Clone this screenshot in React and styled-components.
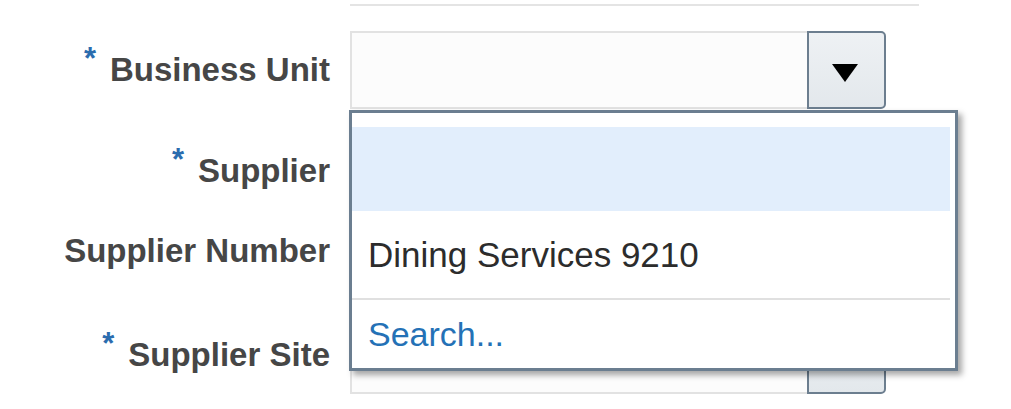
import React from "react";
import styled, { createGlobalStyle } from "styled-components";

const GlobalStyle = createGlobalStyle`
  html, body {
    margin: 0;
    padding: 0;
    background: #ffffff;
  }
  body {
    font-family: "Liberation Sans", Arial, sans-serif;
    width: 1011px;
    height: 409px;
    overflow: hidden;
  }
`;

const Form = styled.div`
  display: flex;
  flex-direction: column;
  width: 1011px;
`;

const Row = styled.div`
  display: grid;
  grid-template-columns: 330px 569px;
  column-gap: 20px;
  align-items: center;
  height: ${(p) => p.$h}px;
  margin-top: ${(p) => p.$mt || 0}px;
`;

const Rule = styled.div`
  grid-column: 2;
  height: 2px;
  background: #e4e4e4;
`;

const Label = styled.div`
  text-align: right;
  font-weight: bold;
  font-size: 33px;
  color: #464646;
  white-space: nowrap;
`;

const Req = styled.span`
  color: #2b6cae;
  font-size: 31px;
  font-weight: bold;
  line-height: 0;
  vertical-align: 12px;
  margin-right: 14px;
`;

const Field = styled.div`
  position: relative;
  display: flex;
  height: 78px;
  width: 536px;
`;

const Input = styled.div`
  flex: 0 0 457px;
  box-sizing: border-box;
  border: 2px solid #e2e2e2;
  border-right: none;
  background: #fcfcfc;
`;

const DropButton = styled.div`
  flex: 0 0 79px;
  box-sizing: border-box;
  border: 2px solid #6c7e8f;
  border-radius: 0 5px 5px 0;
  background: linear-gradient(#eef1f4, #e3e8ec);
  display: flex;
  align-items: center;
  justify-content: center;
  padding-top: 5px;
  padding-right: 3px;
`;

const Popup = styled.div`
  position: absolute;
  left: -1px;
  top: calc(100% + 1px);
  width: 609px;
  height: 261px;
  box-sizing: border-box;
  border: 3px solid #6b7e90;
  background: #ffffff;
  box-shadow: 4px 4px 6px rgba(0, 0, 0, 0.35);
  padding: 14px 5px 0 0;
  display: flex;
  flex-direction: column;
  z-index: 2;
`;

const Option = styled.div`
  height: ${(p) => p.$h}px;
  flex: ${(p) => (p.$grow ? "1" : "none")};
  display: flex;
  align-items: center;
  padding-left: 16px;
  font-size: ${(p) => p.$size || 34}px;
  color: ${(p) => (p.$link ? "#2471b6" : "#2c2c2c")};
  background: ${(p) => (p.$highlight ? "#e2eefc" : "transparent")};
  white-space: nowrap;
`;

const Separator = styled.div`
  height: 2px;
  background: #e0e0e0;
`;

const Arrow = () => (
  <svg width="26" height="18" viewBox="0 0 26 18">
    <polygon points="0,0 26,0 13,18" fill="#000" />
  </svg>
);

const Combo = ({ children }) => (
  <Field>
    <Input />
    <DropButton>
      <Arrow />
    </DropButton>
    {children}
  </Field>
);

export default function App() {
  return (
    <>
      <GlobalStyle />
      <Form>
        <Row $h={2} $mt={4}>
          <Rule />
        </Row>
        <Row $h={78} $mt={25}>
          <Label>
            <Req>*</Req>Business Unit
          </Label>
          <Combo>
            <Popup>
              <Option $h={84} $highlight />
              <Option $h={87} $size={35}>
                Dining Services 9210
              </Option>
              <Separator />
              <Option $grow $link>
                Search...
              </Option>
            </Popup>
          </Combo>
        </Row>
        <Row $h={78} $mt={23}>
          <Label>
            <Req>*</Req>Supplier
          </Label>
          <Combo />
        </Row>
        <Row $h={82}>
          <Label>Supplier Number</Label>
          <div />
        </Row>
        <Row $h={78} $mt={24}>
          <Label>
            <Req>*</Req>Supplier Site
          </Label>
          <Combo />
        </Row>
      </Form>
    </>
  );
}
